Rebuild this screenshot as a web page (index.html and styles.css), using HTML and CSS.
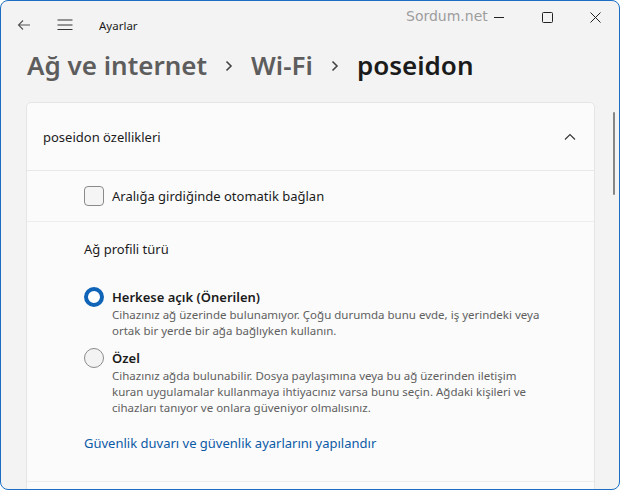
FILE: index.html
```html
<!DOCTYPE html>
<html lang="tr">
<head>
    <meta charset="UTF-8">
    <meta name="viewport" content="width=device-width, initial-scale=1.0">
    <title>Ayarlar</title>
    <link rel="stylesheet" href="styles.css">
</head>
<body>
    <div class="window">
        <header class="titlebar">
            <button class="icon-btn back-btn" aria-label="Geri">
                <svg width="16" height="16" viewBox="0 0 16 16"><path d="M14 8H2.5M7 3.5L2.5 8L7 12.5" fill="none" stroke="#555" stroke-width="1.1"/></svg>
            </button>
            <button class="icon-btn menu-btn" aria-label="Menü">
                <svg width="16" height="16" viewBox="0 0 16 16"><path d="M0.5 3H15.5M0.5 8H15.5M0.5 12.5H15.5" fill="none" stroke="#333" stroke-width="1"/></svg>
            </button>
            <span class="app-title">Ayarlar</span>
            <span class="watermark">Sordum.net</span>
            <div class="caption-buttons">
                <span class="caption-btn"><svg width="10" height="10" viewBox="0 0 10 10"><path d="M0 5.5H10" stroke="#222" stroke-width="1"/></svg></span>
                <span class="caption-btn"><svg width="11" height="11" viewBox="0 0 11 11"><rect x="0.5" y="0.5" width="10" height="10" rx="1" fill="none" stroke="#222" stroke-width="1"/></svg></span>
                <span class="caption-btn"><svg width="11" height="11" viewBox="0 0 11 11"><path d="M0.5 0.5L10.5 10.5M10.5 0.5L0.5 10.5" stroke="#222" stroke-width="1"/></svg></span>
            </div>
        </header>

        <h1 class="breadcrumb">
            <span class="crumb">Ağ ve internet</span>
            <svg class="crumb-sep" width="8" height="12" viewBox="0 0 8 12"><path d="M1.5 1.5L6 6L1.5 10.5" fill="none" stroke="#444" stroke-width="1.6"/></svg>
            <span class="crumb">Wi-Fi</span>
            <svg class="crumb-sep" width="8" height="12" viewBox="0 0 8 12"><path d="M1.5 1.5L6 6L1.5 10.5" fill="none" stroke="#444" stroke-width="1.6"/></svg>
            <span class="crumb current">poseidon</span>
        </h1>

        <div class="content">
            <section class="card">
                <div class="card-header">
                    <span>poseidon özellikleri</span>
                    <svg width="12" height="8" viewBox="0 0 12 8"><path d="M1 6.5L6 1.5L11 6.5" fill="none" stroke="#333" stroke-width="1.1"/></svg>
                </div>

                <div class="card-row check-row">
                    <span class="checkbox"></span>
                    <span>Aralığa girdiğinde otomatik bağlan</span>
                </div>

                <div class="card-row profile">
                    <div class="section-label">Ağ profili türü</div>

                    <div class="option first">
                        <span class="radio checked"></span>
                        <div class="option-text">
                            <div class="option-title">Herkese açık (Önerilen)</div>
                            <div class="option-desc">Cihazınız ağ üzerinde bulunamıyor. Çoğu durumda bunu evde, iş yerindeki veya<br>ortak bir yerde bir ağa bağlıyken kullanın.</div>
                        </div>
                    </div>

                    <div class="option">
                        <span class="radio"></span>
                        <div class="option-text">
                            <div class="option-title">Özel</div>
                            <div class="option-desc">Cihazınız ağda bulunabilir. Dosya paylaşımına veya bu ağ üzerinden iletişim<br>kuran uygulamalar kullanmaya ihtiyacınız varsa bunu seçin. Ağdaki kişileri ve<br>cihazları tanıyor ve onlara güveniyor olmalısınız.</div>
                        </div>
                    </div>

                    <a class="link" href="#">Güvenlik duvarı ve güvenlik ayarlarını yapılandır</a>
                </div>

                <div class="card-row empty"></div>
            </section>

            <div class="scroll-track"><div class="scroll-thumb"></div></div>
        </div>
    </div>
</body>
</html>
```

FILE: styles.css
```css
html, body {
    margin: 0;
    padding: 0;
    background: #ffffff;
}
body {
    font-family: "Segoe UI", "Noto Sans", sans-serif;
    color: #1b1b1b;
}
.window {
    box-sizing: border-box;
    width: 620px;
    height: 490px;
    border: 1px solid #1a6fc4;
    border-radius: 8px;
    background: #f3f3f3;
    overflow: hidden;
}
.titlebar {
    height: 48px;
    display: flex;
    align-items: center;
    position: relative;
}
.icon-btn {
    border: none;
    background: none;
    padding: 0;
    width: 16px;
    height: 16px;
    display: flex;
}
.back-btn {
    margin-left: 15px;
}
.menu-btn {
    margin-left: 25px;
}
.app-title {
    margin-left: 26px;
    font-size: 11.5px;
    color: #1b1b1b;
}
.watermark {
    position: absolute;
    left: 405px;
    top: 7px;
    font-family: "DejaVu Sans", sans-serif;
    font-size: 14px;
    color: #9d9d9d;
}
.caption-buttons {
    margin-left: auto;
    align-self: flex-start;
    display: flex;
}
.caption-btn {
    width: 48px;
    height: 32px;
    display: flex;
    align-items: center;
    justify-content: center;
}
.breadcrumb {
    margin: 0 0 21px;
    padding-left: 26px;
    height: 32px;
    display: flex;
    align-items: center;
    gap: 18px;
    font-size: 26px;
    font-weight: 600;
    line-height: 32px;
    color: #5d5d5d;
}
.crumb-sep {
    margin-top: 2px;
}
.crumb.current {
    color: #1b1b1b;
}
.content {
    display: flex;
    padding-left: 25px;
}
.card {
    box-sizing: border-box;
    width: 569px;
    background: #fbfbfb;
    border: 1px solid #e5e5e5;
    border-radius: 5px;
    font-size: 13px;
}
.card-header {
    height: 67px;
    padding: 0 18px 0 16px;
    display: flex;
    align-items: center;
    justify-content: space-between;
    border-bottom: 1px solid #e8e8e8;
}
.card-row {
    border-bottom: 1px solid #ededed;
    padding-left: 57px;
}
.check-row {
    height: 50px;
    display: flex;
    align-items: center;
    gap: 8px;
}
.checkbox {
    box-sizing: border-box;
    width: 20px;
    height: 20px;
    border: 1px solid #8a8a8a;
    border-radius: 4px;
    background: #f5f5f5;
}
.profile {
    padding-top: 17px;
    padding-bottom: 28px;
}
.section-label {
    line-height: 20px;
}
.option {
    display: flex;
    gap: 8px;
    margin-top: 10px;
}
.option.first {
    margin-top: 29px;
}
.radio {
    box-sizing: border-box;
    flex: none;
    width: 20px;
    height: 20px;
    margin-top: -1px;
    border-radius: 50%;
    border: 1px solid #8a8a8a;
    background: #f3f3f3;
}
.radio.checked {
    border: 4.5px solid #0f64b8;
    background: #ffffff;
}
.option-title {
    line-height: 18px;
    font-weight: 600;
}
.option-desc {
    margin-top: 1px;
    font-size: 11.5px;
    line-height: 16px;
    color: #606060;
}
.link {
    display: block;
    margin-top: 17px;
    line-height: 20px;
    color: #0b5aa6;
    text-decoration: none;
}
.empty {
    height: 40px;
    border-bottom: none;
}
.scroll-track {
    margin-left: 18px;
    padding-top: 10px;
}
.scroll-thumb {
    width: 2px;
    height: 83px;
    border-radius: 1px;
    background: #868686;
}
```
